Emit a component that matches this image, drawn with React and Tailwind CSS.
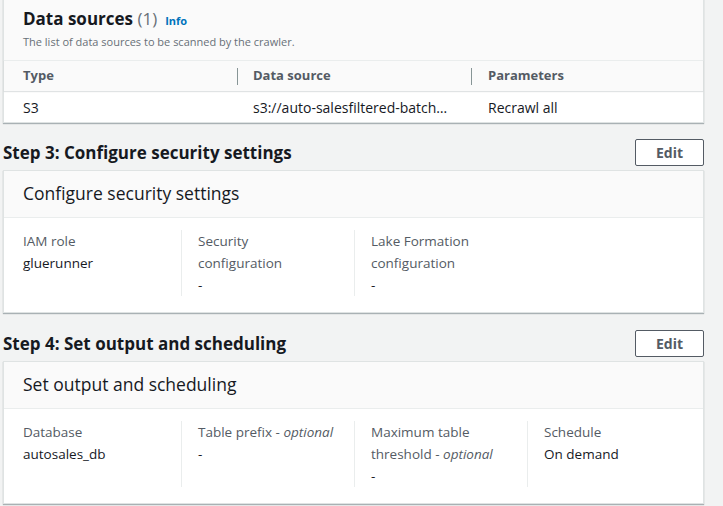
import React from 'react';

const font = { fontFamily: '"Open Sans", "Noto Sans", Arial, sans-serif' };

function EditButton() {
  return (
    <button className="h-[27px] w-[69px] rounded-[2px] border border-[#545b64] bg-white text-[14px] font-bold text-[#545b64]">
      Edit
    </button>
  );
}

function StepHeader({ title }) {
  return (
    <div className="flex items-center justify-between pl-[3px] pr-[19px]">
      <h2 className="pt-[1px] text-[17px] font-bold leading-[24px] text-[#16191f]">{title}</h2>
      <EditButton />
    </div>
  );
}

function Field({ label, value, first, last }) {
  const width = first ? 'w-[159px] pr-[16px]' : last ? 'w-[156px] pl-4' : 'w-[173px] pl-4 pr-[14px]';
  return (
    <div className={`${width} shrink-0 ${last ? '' : 'border-r border-[#eaeded]'} text-[13.5px] leading-[22px]`}>
      <div className="whitespace-nowrap text-[#545b64]">{label}</div>
      <div className="text-[#16191f]">{value}</div>
    </div>
  );
}

function DetailCard({ title, fields }) {
  return (
    <div className="ml-[3px] mr-[19px] mt-[4px] border border-[#dfe3e3] bg-white shadow-[0_1px_1px_rgba(0,28,36,0.3)]">
      <div className="flex h-[47px] items-center border-b border-[#eaeded] bg-[#fafafa] px-[19px] pb-[1px]">
        <h3 className="text-[17.5px] font-normal text-[#16191f]">{title}</h3>
      </div>
      <div className="flex px-[19px] pt-[12px] pb-[16px]">
        {fields.map((f, i) => (
          <Field key={i} {...f} first={i === 0} last={i === fields.length - 1} />
        ))}
      </div>
    </div>
  );
}

export default function App() {
  return (
    <div className="h-[506px] w-[723px] overflow-hidden bg-[#f2f3f3]" style={font}>
      {/* Data sources card (top clipped) */}
      <div className="ml-[3px] mr-[19px] -mt-[2px] border border-[#dfe3e3] bg-white shadow-[0_1px_1px_rgba(0,28,36,0.3)]">
        <div className="bg-[#fafafa] px-[19px] pt-[8px] pb-[10px]">
          <div className="mb-[3px] flex items-baseline gap-2">
            <h2 className="text-[17px] font-bold leading-[24px] text-[#16191f]">
              Data sources <span className="font-normal text-[#687078]">(1)</span>
            </h2>
            <a className="text-[11px] font-bold text-[#0073bb]">Info</a>
          </div>
          <p className="text-[11px] leading-[16px] text-[#687078]">
            The list of data sources to be scanned by the crawler.
          </p>
        </div>
        <div className="flex h-[31px] items-center border-t border-[#eaeded] bg-[#fafafa] text-[13px] font-bold text-[#545b64] shadow-[0_1px_1px_rgba(0,28,36,0.12)]">
          <div className="w-[233px] pl-[19px]">Type</div>
          <div className="h-[17px] border-l border-[#879596]" />
          <div className="w-[233px] pl-[15px]">Data source</div>
          <div className="h-[17px] border-l border-[#879596]" />
          <div className="pl-[16px]">Parameters</div>
        </div>
        <div className="flex h-[31px] items-center pt-[1px] text-[14px] text-[#16191f]">
          <div className="w-[234px] pl-[19px]">S3</div>
          <div className="w-[234px] truncate pl-[15px] pr-[20px]">s3://auto-salesfiltered-batch/raw-data</div>
          <div className="pl-[16px]">Recrawl all</div>
        </div>
      </div>

      <div className="mt-[16px]">
        <StepHeader title="Step 3: Configure security settings" />
        <DetailCard
          title="Configure security settings"
          fields={[
            { label: 'IAM role', value: 'gluerunner' },
            { label: <>Security<br />configuration</>, value: '-' },
            { label: <>Lake Formation<br />configuration</>, value: '-' },
          ]}
        />
      </div>

      <div className="mt-[17px]">
        <StepHeader title="Step 4: Set output and scheduling" />
        <DetailCard
          title="Set output and scheduling"
          fields={[
            { label: 'Database', value: 'autosales_db' },
            { label: <>Table prefix - <i>optional</i></>, value: '-' },
            { label: <>Maximum table<br />threshold - <i>optional</i></>, value: '-' },
            { label: 'Schedule', value: 'On demand' },
          ]}
        />
      </div>
    </div>
  );
}
